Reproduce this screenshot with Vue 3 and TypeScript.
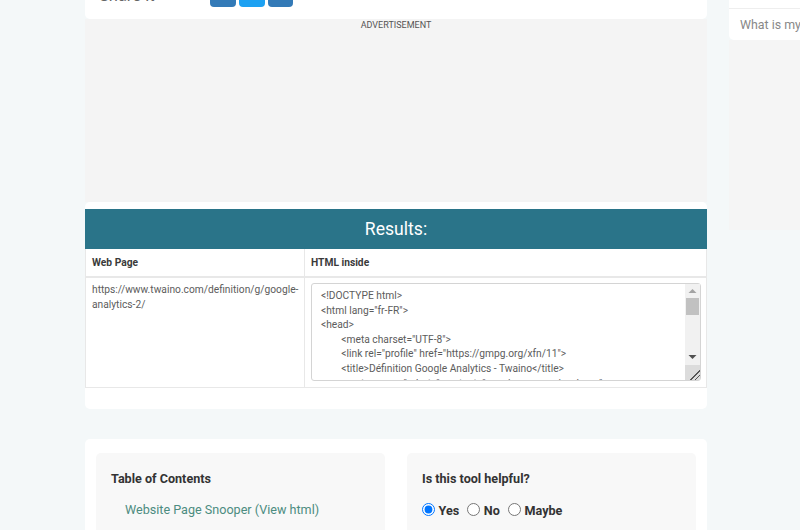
<script setup lang="ts">
const html = `<!DOCTYPE html>
<html lang="fr-FR">
<head>
	<meta charset="UTF-8">
	<link rel="profile" href="https://gmpg.org/xfn/11">
	<title>Définition Google Analytics - Twaino</title>
	<meta name="robots" content="max-image-preview:large">
	<link rel="dns-prefetch" href="//www.twaino.com">
	<link rel="dns-prefetch" href="//fonts.googleapis.com">
	<meta name="viewport" content="width=device-width">
</head>
<body>
</body>
</html>`
</script>

<template>
  <div class="page">
    <main class="main">
      <section class="share-card">
        <span class="share-label">Share it</span>
        <div class="share-buttons">
          <span class="share fb"></span>
          <span class="share tw"></span>
          <span class="share li"></span>
        </div>
      </section>

      <section class="ad">
        <span>ADVERTISEMENT</span>
      </section>

      <section class="results">
        <h2 class="results-title">Results:</h2>
        <table class="table">
          <thead>
            <tr>
              <th class="col-a">Web Page</th>
              <th>HTML inside</th>
            </tr>
          </thead>
          <tbody>
            <tr>
              <td class="url">https://www.twaino.com/definition/g/google-analytics-2/</td>
              <td class="code-cell">
                <div class="code-wrap">
                  <textarea class="code" readonly :value="html"></textarea>
                  <div class="scrollbar" aria-hidden="true">
                    <svg class="arrow" width="15" height="14" viewBox="0 0 15 14">
                      <path d="M3.5 9 L7.5 5 L11.5 9 Z" fill="#a3a3a3" />
                    </svg>
                    <div class="track"><div class="thumb"></div></div>
                    <svg class="arrow" width="15" height="15" viewBox="0 0 15 15">
                      <path d="M3.5 5 L11.5 5 L7.5 9 Z" fill="#505050" />
                    </svg>
                  </div>
                </div>
              </td>
            </tr>
          </tbody>
        </table>
      </section>

      <section class="bottom">
        <div class="panel">
          <h3>Table of Contents</h3>
          <a class="toc-link">Website Page Snooper (View html)</a>
        </div>
        <div class="panel">
          <h3>Is this tool helpful?</h3>
          <div class="options">
            <label><input type="radio" name="helpful" checked />Yes</label>
            <label><input type="radio" name="helpful" />No</label>
            <label><input type="radio" name="helpful" />Maybe</label>
          </div>
        </div>
      </section>
    </main>

    <aside class="side">
      <div class="side-card">
        <div class="side-row-top"></div>
        <div class="side-row">What is my</div>
      </div>
      <div class="side-ad"></div>
    </aside>
  </div>
</template>

<style>
html, body {
  margin: 0;
  height: 530px;
  overflow: hidden;
  background: #f4f8f9;
}
</style>

<style scoped>
.page {
  display: flex;
  align-items: flex-start;
  gap: 22px;
  height: 530px;
  overflow: hidden;
  padding-left: 85px;
  font-family: Roboto, "Liberation Sans", sans-serif;
  color: #333;
}
.main {
  width: 622px;
  flex: none;
}
.share-card {
  height: 19px;
  background: #fff;
  border-radius: 0 0 5px 5px;
  position: relative;
  overflow: hidden;
}
.share-label {
  position: absolute;
  left: 14px;
  top: -14px;
  font-size: 16.5px;
  color: #666;
}
.share-buttons {
  position: absolute;
  left: 125.4px;
  top: 0;
  display: flex;
  gap: 3px;
}
.share {
  width: 25.6px;
  height: 7px;
  border-radius: 0 0 4px 4px;
}
.fb { background: #337ab7; }
.tw { background: #1da1f2; }
.li { background: #337ab7; }
.ad {
  height: 183px;
  background: #f4f4f4;
  text-align: center;
  font-size: 9px;
  line-height: 12px;
  color: #555;
}
.results {
  height: 207px;
  padding-top: 7px;
  background: #fff;
  border-radius: 5px;
  box-sizing: border-box;
}
.results-title {
  margin: 0;
  height: 40px;
  line-height: 40px;
  background: #2a7489;
  color: #fff;
  font-size: 17.6px;
  font-weight: 400;
  text-align: center;
}
.table {
  width: 100%;
  border-collapse: collapse;
  table-layout: fixed;
  font-size: 10.24px;
}
.col-a { width: 206px; }
th {
  height: 27px;
  padding: 0 6px;
  text-align: left;
  font-weight: 700;
  color: #3a3a3a;
  border: 1px solid #e8e8e8;
  border-top: 0;
  border-bottom-width: 2px;
}
td {
  padding: 0;
  vertical-align: top;
  border: 1px solid #e8e8e8;
}
.url {
  padding: 4px 4px 4px 6px;
  line-height: 15px;
  color: #5c5c5c;
}
.code-cell {
  padding: 5px 5px 6px 6px;
}
.code-wrap {
  position: relative;
  height: 98px;
}
.code {
  display: block;
  width: 100%;
  height: 98px;
  box-sizing: border-box;
  padding: 5px 16px 5px 9px;
  border: 1px solid #d4d4d4;
  border-radius: 3px;
  font-family: Roboto, "Liberation Sans", sans-serif;
  font-size: 10.24px;
  line-height: 14.6px;
  color: #5c5c5c;
  tab-size: 8;
  white-space: pre;
  overflow: hidden;
  outline: none;
}
.code::-webkit-resizer {
  background: linear-gradient(
    135deg,
    #dcdcdc 66%,
    #555 66%,
    #555 71%,
    #dcdcdc 71%,
    #dcdcdc 81%,
    #555 81%,
    #555 86%,
    #dcdcdc 86%
  );
}
.scrollbar {
  position: absolute;
  top: 1px;
  right: 1px;
  bottom: 16px;
  width: 15px;
  display: flex;
  flex-direction: column;
  background: #f1f1f1;
}
.arrow {
  display: block;
  flex: none;
}
.track {
  flex: 1;
  padding: 0 1px;
}
.thumb {
  height: 17px;
  background: #c1c1c1;
}
.bottom {
  margin-top: 30px;
  background: #fff;
  border-radius: 5px;
  padding: 14px 11px;
  display: grid;
  grid-template-columns: 289px 289px;
  justify-content: space-between;
  height: 120px;
  box-sizing: border-box;
}
.panel {
  background: #f8f8f8;
  border-radius: 5px;
  padding: 18px 15px;
  height: 110px;
}
.panel h3 {
  margin: 0;
  font-size: 12.6px;
  line-height: 16px;
  font-weight: 700;
  color: #333;
}
.toc-link {
  display: block;
  margin: 15px 0 0 14px;
  font-size: 12.6px;
  line-height: 16px;
  color: #4c8c80;
}
.options {
  display: flex;
  gap: 8px;
  margin-top: 16px;
}
.options label {
  display: flex;
  align-items: center;
  font-size: 12.6px;
  font-weight: 700;
  line-height: 16px;
}
.options input {
  margin: 0 3.6px 3px 0;
  width: 13px;
  height: 13px;
}
.side {
  width: 71px;
  flex: none;
  overflow: hidden;
}
.side-card {
  background: #fff;
  border-radius: 0 0 0 5px;
}
.side-row-top {
  height: 8px;
  border-bottom: 1px solid #eee;
}
.side-row {
  height: 31px;
  line-height: 32px;
  padding-left: 11px;
  font-size: 12.4px;
  color: #888;
  white-space: nowrap;
}
.side-ad {
  height: 190px;
  background: #f5f5f5;
}
</style>
